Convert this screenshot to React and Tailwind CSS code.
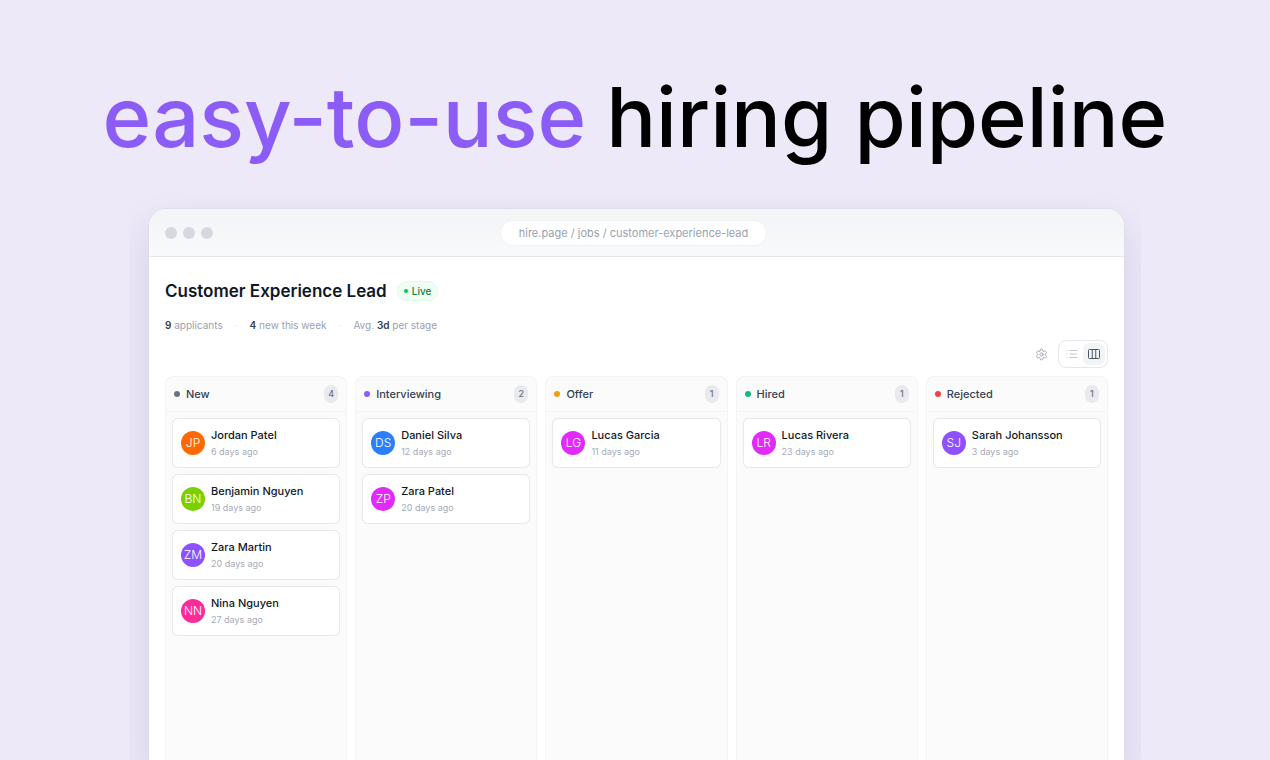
import React from "react";
import { Settings } from "lucide-react";

const stages = [
  {
    name: "New",
    dot: "bg-[#6b7280]",
    people: [
      { name: "Jordan Patel", initials: "JP", color: "bg-[#ff6900]", ago: "6 days ago" },
      { name: "Benjamin Nguyen", initials: "BN", color: "bg-[#7ccf00]", ago: "19 days ago" },
      { name: "Zara Martin", initials: "ZM", color: "bg-[#8e51ff]", ago: "20 days ago" },
      { name: "Nina Nguyen", initials: "NN", color: "bg-[#fb2c99]", ago: "27 days ago" },
    ],
  },
  {
    name: "Interviewing",
    dot: "bg-[#8b5cf6]",
    people: [
      { name: "Daniel Silva", initials: "DS", color: "bg-[#2b7fff]", ago: "12 days ago" },
      { name: "Zara Patel", initials: "ZP", color: "bg-[#e12afb]", ago: "20 days ago" },
    ],
  },
  {
    name: "Offer",
    dot: "bg-[#f59e0b]",
    people: [{ name: "Lucas Garcia", initials: "LG", color: "bg-[#e12afb]", ago: "11 days ago" }],
  },
  {
    name: "Hired",
    dot: "bg-[#10b981]",
    people: [{ name: "Lucas Rivera", initials: "LR", color: "bg-[#e12afb]", ago: "23 days ago" }],
  },
  {
    name: "Rejected",
    dot: "bg-[#ef4444]",
    people: [{ name: "Sarah Johansson", initials: "SJ", color: "bg-[#8e51ff]", ago: "3 days ago" }],
  },
];

function Card({ person }) {
  return (
    <li className="flex h-[50px] items-center gap-1.5 rounded-md border border-[#e9eaec] bg-white px-2 shadow-[0_0_1px_rgba(0,0,0,0.08)]">
      <span className={`flex size-6 shrink-0 items-center justify-center rounded-full text-xs font-light text-white ${person.color}`}>
        {person.initials}
      </span>
      <div className="min-w-0">
        <p className="truncate text-[11px] leading-[18px] font-medium text-[#101828]">{person.name}</p>
        <p className="text-[9px] leading-4 text-[#a5abb7]">{person.ago}</p>
      </div>
    </li>
  );
}

function Column({ stage }) {
  return (
    <section className="flex min-w-0 flex-col rounded-t-lg border border-b-0 border-[#f3f4f6] bg-[#fbfbfb]">
      <header className="flex h-[35px] items-center gap-1.5 border-b border-[#f3f4f6] px-2">
        <span className={`size-1.5 rounded-full ${stage.dot}`} />
        <h2 className="flex-1 text-[11px] font-medium text-[#364153]">{stage.name}</h2>
        <span className="flex h-[18px] min-w-3.5 items-center justify-center rounded-full bg-[#e9eaee] px-1 text-[9px] font-medium text-[#6a7282]">
          {stage.people.length}
        </span>
      </header>
      <ul className="flex flex-col gap-1.5 p-1.5">
        {stage.people.map((p) => (
          <Card key={p.name} person={p} />
        ))}
      </ul>
    </section>
  );
}

export default function App() {
  return (
    <main className="flex h-screen flex-col overflow-hidden bg-[#ede9f8] font-['Inter',sans-serif]">
      <h1 className="flex justify-center gap-5 pt-[67px] text-[83px] leading-[100px] font-medium whitespace-nowrap text-black">
        <span className="text-[#8b5cf6]">easy-to-use</span>
        <span>hiring pipeline</span>
      </h1>
      <div className="mt-[9px] mr-[129px] ml-[129px] flex min-h-0 flex-1 overflow-hidden pt-8 pr-4 pl-[19px]">
        <div className="flex min-w-0 flex-1 flex-col rounded-t-[18px] border border-b-0 border-[#dfdbea] bg-white shadow-[0_20px_40px_rgba(60,40,120,0.14)]">
          <div className="flex h-12 shrink-0 items-center rounded-t-[17px] border-b border-[#e5e7eb] bg-linear-to-b from-[#f3f4f6] to-[#f9fafb] px-4">
            <div className="flex gap-1.5">
              <span className="size-3 rounded-full bg-[#d5d8df]" />
              <span className="size-3 rounded-full bg-[#d5d8df]" />
              <span className="size-3 rounded-full bg-[#d5d8df]" />
            </div>
            <div className="flex flex-1 justify-center pr-[54px]">
              <p className="rounded-full border border-[#f1f2f4] bg-white px-[18px] py-[3px] text-[11px] leading-[18px] whitespace-nowrap text-[#99a1af]">
                hire.page / jobs / customer-experience-lead
              </p>
            </div>
          </div>
          <div className="flex min-h-0 flex-1 flex-col px-4 pt-6">
            <div className="flex h-5 items-center gap-2.5">
              <h2 className="text-[17px] leading-5 font-semibold whitespace-nowrap text-[#101828]">Customer Experience Lead</h2>
              <span className="flex h-5 items-center gap-1 rounded-full border border-[#dcfce7] bg-[#f0fdf4] px-1.5 text-[10px] font-medium text-[#15803d]">
                <span className="size-1 rounded-full bg-[#00c950]" />
                Live
              </span>
            </div>
            <div className="mt-4 flex h-4 items-center gap-3 text-[10px] text-[#99a1af]">
              <span><b className="font-semibold text-[#364153]">9</b> applicants</span>
              <span className="text-[#e5e7eb]">·</span>
              <span><b className="font-semibold text-[#364153]">4</b> new this week</span>
              <span className="text-[#e5e7eb]">·</span>
              <span>Avg. <b className="font-semibold text-[#364153]">3d</b> per stage</span>
            </div>
            <div className="mt-[7px] flex h-7 items-center justify-end gap-2.5">
              <button aria-label="Settings" className="text-[#99a1af]">
                <Settings size={13} strokeWidth={1.75} />
              </button>
              <div className="flex h-7 rounded-lg border border-[#e5e7eb] p-0.5">
                <button aria-label="List view" className="flex w-[22px] items-center justify-center rounded-md text-[#c3c8d0]">
                  <svg width="12" height="12" viewBox="0 0 12 12" fill="none" stroke="currentColor" strokeWidth="1">
                    <path d="M0.5 2.5h1M0.5 6h1M0.5 9.5h1M3.5 2.5h8M3.5 6h8M3.5 9.5h8" />
                  </svg>
                </button>
                <button aria-label="Board view" className="flex w-[22px] items-center justify-center rounded-md bg-[#f3f4f6] text-[#4a5565]">
                  <svg width="12" height="12" viewBox="0 0 12 12" fill="none" stroke="currentColor" strokeWidth="1">
                    <rect x="0.5" y="1.5" width="11" height="9" rx="1" />
                    <path d="M4.25 1.5v9M7.75 1.5v9" />
                  </svg>
                </button>
              </div>
            </div>
            <div className="mt-2 grid min-h-0 flex-1 grid-cols-5 gap-2">
              {stages.map((s) => (
                <Column key={s.name} stage={s} />
              ))}
            </div>
          </div>
        </div>
      </div>
    </main>
  );
}
